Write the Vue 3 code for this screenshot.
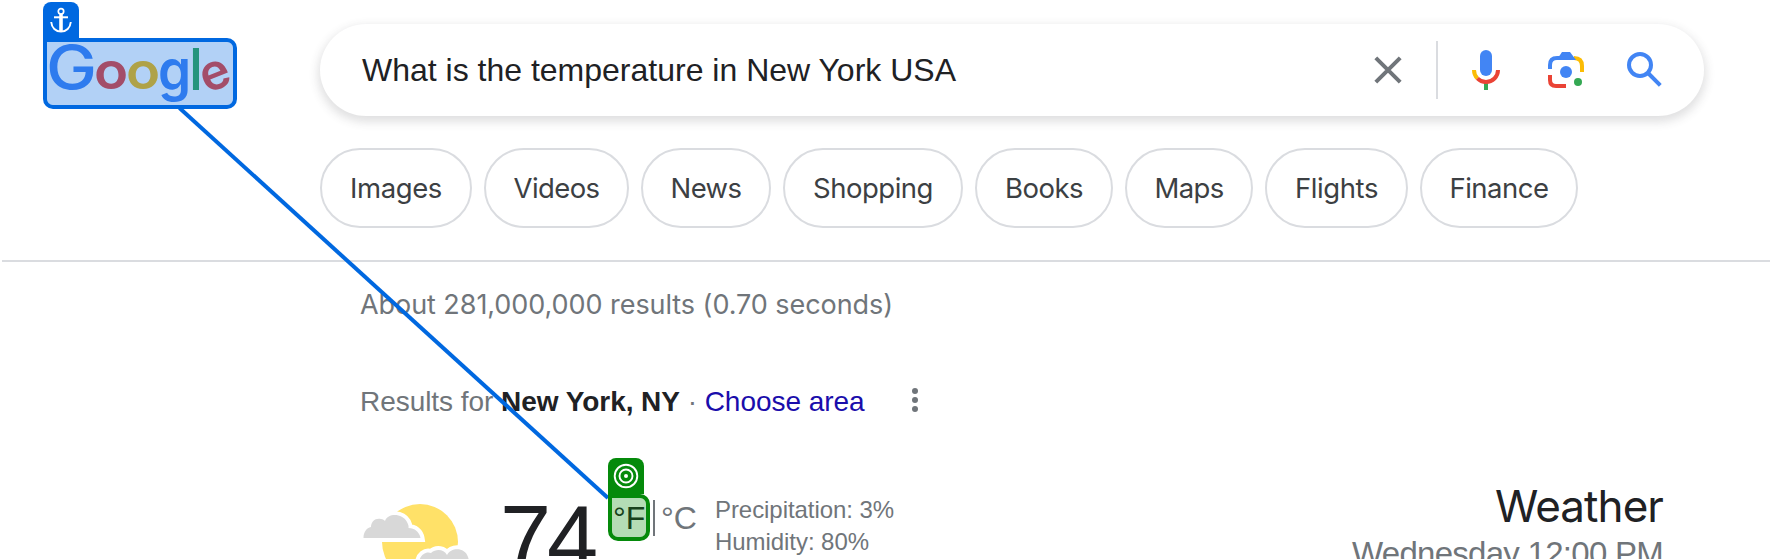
<script setup>
const tabs = [
  { label: 'Images', width: 152, text: 92 },
  { label: 'Videos', width: 145, text: 86 },
  { label: 'News', width: 130, text: 71 },
  { label: 'Shopping', width: 180, text: 120 },
  { label: 'Books', width: 138, text: 78 },
  { label: 'Maps', width: 128, text: 69 },
  { label: 'Flights', width: 143, text: 83 },
  { label: 'Finance', width: 158, text: 99 }
]

// Tracks a single-line label out or in so that it spans the given width.
const vFit = {
  mounted(el, { value }) {
    const natural = el.getBoundingClientRect().width
    el.style.letterSpacing = (value - natural) / el.textContent.length + 'px'
  }
}
</script>

<template>
  <div class="page">
    <header class="top">
      <div class="logo">
        <svg class="wordmark" width="194" height="71" viewBox="43 38 194 71" role="img" aria-label="Google">
          <g class="wm" text-anchor="middle">
            <text transform="translate(71.500 89) scale(1.12 1)" font-size="61" font-weight="500" fill="#4285f4">G</text>
            <text transform="translate(111 89.300) scale(1.080 1)" font-size="52" font-weight="600" fill="#ea4335">o</text>
            <text transform="translate(143 89.300) scale(1.080 1)" font-size="52" font-weight="600" fill="#fbbc05">o</text>
            <text transform="translate(174.500 89.800) scale(1.040 1.110)" font-size="51" font-weight="600" fill="#4285f4">g</text>
            <text transform="translate(196 89.500) scale(.82 1)" font-size="58" font-weight="600" fill="#34a853">l</text>
            <text transform="translate(215.200 75) rotate(-22)" y="14.300" font-size="50" font-weight="600" fill="#ea4335">e</text>
          </g>
        </svg>
      </div>
      <div class="search">
        <span class="query" v-fit="594">What is the temperature in New York USA</span>
        <svg class="close" width="28" height="28" viewBox="0 0 28 28"><path d="M1.8 1.8 26.2 26.2M26.2 1.8 1.8 26.2" stroke="#70757a" stroke-width="4" /></svg>
        <i class="split"></i>
        <svg class="mic" width="32" height="44" viewBox="0 0 32 44" fill="none">
          <rect x="10" y="2" width="12" height="26" rx="6" fill="#4285f4" />
          <path d="M16 35v7" stroke="#34a853" stroke-width="4" />
          <path d="M4 22a12 12 0 0 0 3.4 8.4" stroke="#fbbc05" stroke-width="4" />
          <path d="M7.400 30.400C9.600 32.700 12.600 34 16 34a12 12 0 0 0 12-12" stroke="#ea4335" stroke-width="4" />
        </svg>
        <svg class="lens" width="40" height="40" viewBox="0 0 40 40" fill="none">
          <path d="M28 8q8 0 8 8v6" stroke="#fbbc05" stroke-width="4" />
          <path d="M4 19v-4q0-7 7-7h15" stroke="#4285f4" stroke-width="4" />
          <path d="M12 8 16 2h8l6 8H12z" fill="#4285f4" />
          <path d="M4 25v5q0 6 6 6h10" stroke="#ea4335" stroke-width="4" />
          <circle cx="20" cy="22" r="6" fill="#4285f4" />
          <circle cx="32" cy="32" r="4" fill="#34a853" />
        </svg>
        <svg class="find" width="40" height="40" viewBox="0 0 40 40" fill="none" stroke="#4285f4" stroke-width="4">
          <circle cx="16" cy="15" r="11" /><path d="M24.500 23.500 36.300 35.300" />
        </svg>
      </div>
    </header>

    <nav class="tabs">
      <a v-for="t in tabs" :key="t.label" class="tab" :style="{ width: t.width + 'px' }"><span v-fit="t.text">{{ t.label }}</span></a>
    </nav>
    <hr class="rule" />

    <main class="results">
      <p class="stats"><span v-fit="533">About 281,000,000 results (0.70 seconds)</span></p>
      <div class="area">
        <span v-fit="504.500">Results for <b>New York, NY</b> · <a class="choose">Choose area</a></span>
        <svg class="more" width="6" height="26" viewBox="0 0 6 26" fill="#70757a"><circle cx="3" cy="4" r="3" /><circle cx="3" cy="13" r="3" /><circle cx="3" cy="22" r="3" /></svg>
      </div>
      <section class="weather">
        <svg class="sky" width="112" height="62" viewBox="362 500 112 62">
          <circle cx="420" cy="542" r="38" fill="#ffe168" />
          <path class="cloud" d="M363.500 538c0-6 3-10 7.500-11 0-6 5-9.500 10-8 2 0 3 1 4 2 3-8 17-8 22 1 1.500 3 1.800 4 1.500 6 6 0 11 4 12 10z" />
          <path class="cloud" d="M419 564c0-9 7-13 12-11 6-5 13-3 16 2 4-8 18-8 21 2 1 3 1 4 1 7z" />
        </svg>
        <span class="temp"><span v-fit="94">74</span></span>
        <span class="unit f">°F</span>
        <i class="bar"></i>
        <span class="unit">°C</span>
        <div class="facts">
          <div><span v-fit="179">Precipitation: 3%</span></div>
          <div><span v-fit="154">Humidity: 80%</span></div>
        </div>
        <div class="when">
          <div class="title"><span v-fit="168">Weather</span></div>
          <div class="time"><span v-fit="311">Wednesday 12:00 PM</span></div>
        </div>
      </section>
    </main>

    <svg class="link" width="1770" height="559" viewBox="0 0 1770 559"><path d="M179.500 108 608 498" stroke="#0068e0" stroke-width="4" /></svg>
    <div class="mark anchor">
      <div class="flag">
        <svg width="36" height="36" viewBox="0 0 36 36" fill="none" stroke="#fff">
          <circle cx="18" cy="9.300" r="2.700" stroke-width="1.700" />
          <path d="M11 15.300h14" stroke-width="2" /><path d="M18 12v18" stroke-width="3.600" />
          <path d="M8.200 20c.5 5.800 4.500 9.600 9.800 9.600s9.300-3.800 9.800-9.600" stroke-width="1.900" />
        </svg>
      </div>
    </div>
    <div class="mark target">
      <div class="flag">
        <svg width="36" height="36" viewBox="0 0 36 36" fill="none" stroke="#fff" stroke-width="1.900">
          <circle cx="18" cy="18" r="11.300" /><circle cx="18" cy="18" r="6.500" /><circle cx="18" cy="18" r="2" fill="#fff" stroke="none" />
        </svg>
      </div>
    </div>
  </div>
</template>

<style>
body { margin: 0; overflow: hidden; }
</style>

<style scoped>
.page { position: relative; width: 1770px; height: 559px; overflow: hidden; background: #fff; color: #202124; font-family: "Liberation Sans", Arial, sans-serif; white-space: nowrap; }
.page svg { display: block; flex: none; }
.top { display: flex; height: 124px; box-sizing: border-box; padding: 24px 66px 8px 43px; }
.logo { width: 277px; padding-top: 14px; box-sizing: border-box; flex: none; }
.page .wordmark { overflow: visible; }
.wm { font-family: Inter, sans-serif; }
.search { flex: 1; display: flex; align-items: center; height: 92px; border-radius: 46px; box-sizing: border-box; padding: 0 40px 0 42px; box-shadow: 0 4px 10px 2px rgba(64, 60, 67, .16); }
.query { font-size: 32px; line-height: 40px; }
.close { margin-left: auto; }
.split { width: 2px; height: 58px; background: #dadce0; margin: 0 32px 0 34px; }
.lens { margin: 0 38px 0 44px; }
.tabs { display: flex; gap: 12px; margin: 24px 0 0 320px; font-family: Inter, sans-serif; font-size: 27.5px; color: #3c4043; }
.tab { display: flex; align-items: center; justify-content: center; height: 80px; box-sizing: border-box; border: 2px solid #dadce0; border-radius: 40px; }
.rule { height: 2px; border: 0; margin: 32px 0 0 2px; background: #dadce0; }
.results { padding: 23px 105px 0 360px; }
.stats { margin: 0; height: 40px; line-height: 40px; font-family: Inter, sans-serif; font-size: 27px; color: #70757a; }
.area { display: flex; align-items: center; margin-top: 57px; height: 40px; line-height: 40px; font-size: 28px; color: #70757a; }
.area b { color: #202124; }
.choose { color: #1a0dab; }
.more { margin-left: 47px; margin-top: -4px; }
.weather { display: flex; align-items: flex-start; height: 137px; }
.sky { margin: 78px 0 0 2px; }
.temp { font-size: 92px; line-height: 100px; margin-top: 66px; margin-left: 26px; width: 113px; }
.unit { font-size: 32px; line-height: 36px; margin-top: 78px; color: #70757a; width: 54px; }
.f { color: #202124; width: 40px; }
.bar { width: 2px; height: 36px; margin: 78px 6px 0 0; background: #70757a; }
.facts { margin-top: 72px; font-size: 24px; line-height: 32px; color: #70757a; }
.when { margin-left: auto; margin-top: 60px; margin-right: 2px; text-align: right; }
.title { font-family: Inter, sans-serif; font-size: 44px; line-height: 48px; }
.time { font-size: 33px; line-height: 48px; color: #70757a; }
.cloud { fill: #d8d8d8; stroke: #fff; stroke-width: 8px; paint-order: stroke; }
.link { position: absolute; left: 0; top: 0; }
.mark { position: absolute; box-sizing: border-box; border: 4px solid; border-radius: 0 10px 10px 10px; }
.flag { position: absolute; left: -4px; top: -40px; width: 36px; height: 36px; border-radius: 8px 8px 0 0; }
.anchor { left: 43px; top: 38px; width: 194px; height: 71px; border-color: #0068e0; }
.anchor::before, .target::before { content: ""; position: absolute; inset: 0; border-radius: 0 6px 6px 6px; }
.anchor { border-bottom-left-radius: 10px; }
.anchor::before { background: rgba(0, 104, 224, .3); }
.anchor .flag { background: #0068e0; }
.target { left: 608px; top: 494px; width: 42px; height: 47px; border-color: #058a0b; }
.target::before { background: rgba(5, 138, 11, .3); }
.target .flag { background: #058a0b; }
</style>
